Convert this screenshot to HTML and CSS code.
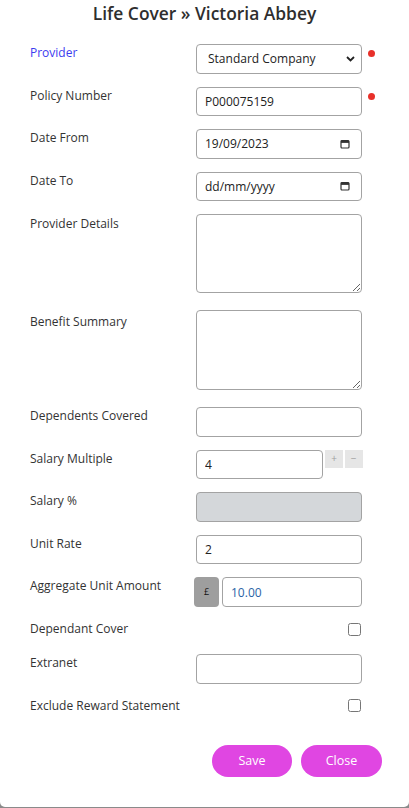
FILE: index.html
```html
<!DOCTYPE html>
<html lang="en">
<head>
<meta charset="utf-8">
<title>Life Cover » Victoria Abbey</title>
<link rel="stylesheet" href="styles.css">
</head>
<body>
<div class="modal">
  <h1 class="title">Life Cover » Victoria Abbey</h1>
  <form class="form">
    <div class="row">
      <label class="lbl lbl-link">Provider</label>
      <div class="ctl">
        <div class="box select-box">
          <span class="box-text">Standard Company</span>
          <svg class="chev" width="9" height="6" viewBox="0 0 9 6"><path d="M1 1l3.5 3.5L8 1" fill="none" stroke="#222" stroke-width="1.8"/></svg>
        </div>
      </div>
      <span class="req"></span>
    </div>
    <div class="row">
      <label class="lbl">Policy Number</label>
      <div class="ctl"><input class="box inp" type="text" value="P000075159"></div>
      <span class="req"></span>
    </div>
    <div class="row">
      <label class="lbl">Date From</label>
      <div class="ctl">
        <div class="box date-box">
          <span class="box-text">19/09/2023</span>
          <svg class="cal" width="10" height="10" viewBox="0 0 10 10"><rect x="1" y="1.5" width="8" height="7.5" rx="1" fill="none" stroke="#333" stroke-width="1.2"/><rect x="1" y="1.5" width="8" height="2.4" fill="#333"/></svg>
        </div>
      </div>
    </div>
    <div class="row">
      <label class="lbl">Date To</label>
      <div class="ctl">
        <div class="box date-box">
          <span class="box-text">dd/mm/yyyy</span>
          <svg class="cal" width="10" height="10" viewBox="0 0 10 10"><rect x="1" y="1.5" width="8" height="7.5" rx="1" fill="none" stroke="#333" stroke-width="1.2"/><rect x="1" y="1.5" width="8" height="2.4" fill="#333"/></svg>
        </div>
      </div>
    </div>
    <div class="row row-ta">
      <label class="lbl lbl-ta">Provider Details</label>
      <div class="ctl"><textarea class="box ta ta1"></textarea></div>
    </div>
    <div class="row row-ta">
      <label class="lbl lbl-ta2">Benefit Summary</label>
      <div class="ctl"><textarea class="box ta ta2"></textarea></div>
    </div>
    <div class="row">
      <label class="lbl">Dependents Covered</label>
      <div class="ctl"><input class="box inp" type="text"></div>
    </div>
    <div class="row">
      <label class="lbl">Salary Multiple</label>
      <div class="ctl ctl-spin">
        <input class="box inp inp-spin" type="text" value="4">
        <div class="spin">
          <span class="spin-btn">+</span>
          <span class="spin-btn">−</span>
        </div>
      </div>
    </div>
    <div class="row">
      <label class="lbl">Salary %</label>
      <div class="ctl"><input class="box inp inp-disabled" type="text" disabled></div>
    </div>
    <div class="row">
      <label class="lbl">Unit Rate</label>
      <div class="ctl"><input class="box inp" type="text" value="2"></div>
    </div>
    <div class="row">
      <label class="lbl">Aggregate Unit Amount</label>
      <div class="ctl ctl-group">
        <span class="addon">£</span>
        <input class="box inp inp-group" type="text" value="10.00">
      </div>
    </div>
    <div class="row row-check">
      <label class="lbl">Dependant Cover</label>
      <div class="ctl ctl-check"><input class="chk" type="checkbox"></div>
    </div>
    <div class="row">
      <label class="lbl">Extranet</label>
      <div class="ctl"><input class="box inp" type="text"></div>
    </div>
    <div class="row row-check">
      <label class="lbl">Exclude Reward Statement</label>
      <div class="ctl ctl-check"><input class="chk" type="checkbox"></div>
    </div>
  </form>
  <div class="actions">
    <button class="btn" type="button">Save</button>
    <button class="btn" type="button">Close</button>
  </div>
</div>
</body>
</html>
```

FILE: styles.css
```css
html {
  background: #8a8a8a;
}
body {
  margin: 0;
  font-family: "Open Sans", "Noto Sans", sans-serif;
  color: #333;
}
.modal {
  background: #fff;
  height: 807px;
  border-radius: 0 0 5px 5px;
  box-sizing: border-box;
  overflow: hidden;
}
.title {
  margin: 0;
  padding-top: 1px;
  height: 44px;
  box-sizing: border-box;
  font-size: 17.4px;
  line-height: 24px;
  font-weight: 600;
  text-align: center;
  color: #2e2e2e;
}
.form {
  display: flex;
  flex-direction: column;
  gap: 13px;
  padding-left: 30px;
}
.row {
  display: flex;
  align-items: flex-start;
}
.row-ta {
  margin-bottom: 4px;
}
.lbl {
  flex: 0 0 166px;
  font-size: 12px;
  line-height: 17px;
  color: #333;
}
.lbl-link {
  color: #3c3cef;
}
.lbl-ta {
  padding-top: 1px;
}
.lbl-ta2 {
  padding-top: 3px;
}
.ctl {
  width: 166px;
  flex: 0 0 166px;
}
.box {
  box-sizing: border-box;
  width: 100%;
  height: 29.5px;
  border: 1px solid #a3a3a3;
  border-radius: 4px;
  background: #fff;
  font-family: "Open Sans", "Noto Sans", sans-serif;
  font-size: 12px;
  color: #222;
  margin: 0;
}
.inp {
  display: block;
  padding: 0 8px;
  outline: none;
}
.select-box, .date-box {
  display: flex;
  align-items: center;
  justify-content: space-between;
}
.select-box {
  padding: 0 6px 0 11px;
}
.date-box {
  padding: 0 11px 0 8px;
}
.box-text {
  line-height: 17px;
}
.chev {
  display: block;
}
.cal {
  display: block;
}
.req {
  width: 7px;
  height: 7px;
  border-radius: 50%;
  background: #e8302a;
  margin: 6px 0 0 6px;
}
.ta {
  display: block;
  resize: vertical;
  padding: 4px 8px;
}
.ta1 {
  height: 79px;
}
.ta2 {
  height: 80px;
}
.ctl-spin {
  display: flex;
  align-items: flex-start;
}
.inp-spin {
  width: 127px;
  flex: 0 0 127px;
}
.spin {
  display: flex;
  gap: 1.5px;
  margin-left: 2px;
}
.spin-btn {
  width: 18px;
  height: 18px;
  background: #e6e6e6;
  color: #a0a0a0;
  font-size: 10px;
  line-height: 17px;
  text-align: center;
}
.inp-disabled {
  background: #d4d7da;
}
.ctl-group {
  display: flex;
  align-items: flex-start;
  margin-left: -2px;
  width: 168px;
  flex-basis: 168px;
}
.addon {
  width: 25px;
  height: 30px;
  flex: 0 0 25px;
  background: #9e9e9e;
  border-radius: 4px;
  font-size: 9px;
  line-height: 30px;
  text-align: center;
  color: #111;
}
.inp-group {
  margin-left: 3px;
  flex: 1 1 0;
  min-width: 0;
  width: 0;
  height: 30px;
  color: #2a63a6;
}
.row-check {
  height: 21px;
}
.ctl-check {
  display: flex;
  justify-content: flex-end;
}
.chk {
  width: 13px;
  height: 13px;
  margin: 2.5px 1px 0 0;
}
.actions {
  display: flex;
  justify-content: flex-end;
  gap: 9px;
  padding-right: 27px;
  margin-top: 27px;
}
.btn {
  width: 80px;
  height: 32px;
  border: none;
  border-radius: 16px;
  background: #e046e2;
  color: #fff;
  font-family: "Open Sans", "Noto Sans", sans-serif;
  font-size: 12.5px;
  padding: 0;
}
.btn + .btn {
  width: 81px;
}
```
